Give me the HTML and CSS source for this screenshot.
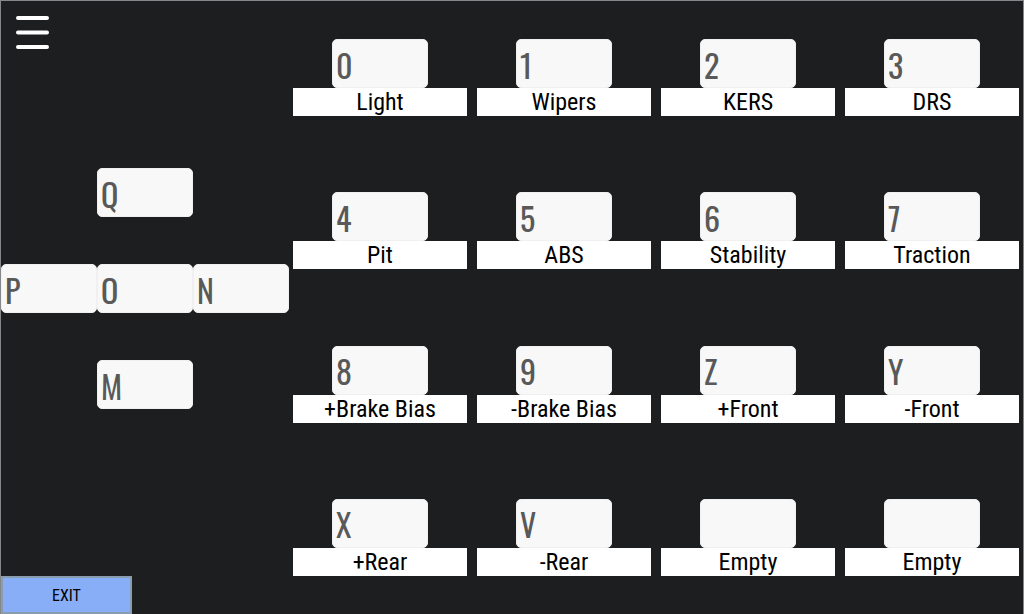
FILE: index.html
```html
<!DOCTYPE html>
<html lang="en">
<head>
<meta charset="utf-8">
<meta name="viewport" content="width=device-width, initial-scale=1">
<title>Key bindings</title>
<link rel="stylesheet" href="styles.css">
</head>
<body>
<div class="app">
  <aside class="side">
    <header class="side-top">
      <button class="menu" type="button" aria-label="Menu">
        <svg viewBox="0 0 34 34" width="34" height="34" aria-hidden="true"><path d="M2 2H31M2 16.500H31M2 31H31" fill="none" stroke="#fff" stroke-width="4" stroke-linecap="round"/></svg>
      </button>
    </header>
    <section class="pad" aria-label="Direction keys">
      <input class="key pad-up" aria-label="Up" placeholder="Q">
      <input class="key pad-left" aria-label="Left" placeholder="P">
      <input class="key pad-mid" aria-label="Enter" placeholder="O">
      <input class="key pad-right" aria-label="Right" placeholder="N">
      <input class="key pad-down" aria-label="Down" placeholder="M">
    </section>
    <button class="exit" type="button">EXIT</button>
  </aside>
  <main class="bindings">
    <div class="binding"><input class="key" id="k0" placeholder="0"><label class="name" for="k0">Light</label></div>
    <div class="binding"><input class="key" id="k1" placeholder="1"><label class="name" for="k1">Wipers</label></div>
    <div class="binding"><input class="key" id="k2" placeholder="2"><label class="name" for="k2">KERS</label></div>
    <div class="binding"><input class="key" id="k3" placeholder="3"><label class="name" for="k3">DRS</label></div>
    <div class="binding"><input class="key" id="k4" placeholder="4"><label class="name" for="k4">Pit</label></div>
    <div class="binding"><input class="key" id="k5" placeholder="5"><label class="name" for="k5">ABS</label></div>
    <div class="binding"><input class="key" id="k6" placeholder="6"><label class="name" for="k6">Stability</label></div>
    <div class="binding"><input class="key" id="k7" placeholder="7"><label class="name" for="k7">Traction</label></div>
    <div class="binding"><input class="key" id="k8" placeholder="8"><label class="name" for="k8">+Brake Bias</label></div>
    <div class="binding"><input class="key" id="k9" placeholder="9"><label class="name" for="k9">-Brake Bias</label></div>
    <div class="binding"><input class="key" id="k10" placeholder="Z"><label class="name" for="k10">+Front</label></div>
    <div class="binding"><input class="key" id="k11" placeholder="Y"><label class="name" for="k11">-Front</label></div>
    <div class="binding"><input class="key" id="k12" placeholder="X"><label class="name" for="k12">+Rear</label></div>
    <div class="binding"><input class="key" id="k13" placeholder="V"><label class="name" for="k13">-Rear</label></div>
    <div class="binding"><input class="key" id="k14"><label class="name" for="k14">Empty</label></div>
    <div class="binding"><input class="key" id="k15"><label class="name" for="k15">Empty</label></div>
  </main>
</div>
</body>
</html>
```
FILE: styles.css
```css
* { box-sizing: border-box; }

body {
  margin: 0;
  background: #1d1e20;
  color: #000;
  font-family: "Roboto Condensed", "Liberation Sans Narrow", Roboto, sans-serif;
}

.app {
  display: grid;
  grid-template-columns: 288px 1fr;
  min-height: 100vh;
  border: 1px solid #85888a;
  border-bottom: 0;
}

.side {
  display: grid;
  grid-template-rows: 1fr auto 1fr 38px;
}

.side-top { padding: 15px; }

.menu {
  display: block;
  padding: 0;
  border: 0;
  background: none;
}

.menu svg { display: block; }

.pad {
  display: grid;
  grid-template-columns: repeat(3, 96px);
  grid-template-rows: repeat(3, 96px);
  align-items: center;
}

.pad-up { grid-area: 1 / 2; }
.pad-left { grid-area: 2 / 1; }
.pad-mid { grid-area: 2 / 2; }
.pad-right { grid-area: 2 / 3; }
.pad-down { grid-area: 3 / 2; }

.key {
  display: block;
  width: 96px;
  height: 49px;
  padding: 1px 3px 0;
  border: 1px solid #f0f0f0;
  border-radius: 5px;
  background: #f8f8f8;
  color: #595959;
  font-family: Oswald, "Roboto Condensed", "Liberation Sans Narrow", Roboto, sans-serif;
  font-size: 32px;
}

.key::placeholder {
  color: #595959;
  opacity: 1;
}

.exit {
  grid-row: 4;
  width: 131px;
  padding: 0;
  border: 2px solid #8a9cb0;
  background: #88aef8;
  color: #000;
  font-family: inherit;
  font-size: 16px;
}

.bindings {
  display: grid;
  grid-template-columns: repeat(4, 1fr);
  grid-template-rows: repeat(4, 1fr);
  column-gap: 10px;
  padding: 0 4px;
}

.binding {
  display: flex;
  flex-direction: column;
  align-items: center;
  justify-content: center;
}

.name {
  width: 100%;
  background: #fff;
  font-size: 24px;
  line-height: 28px;
  text-align: center;
}
```
